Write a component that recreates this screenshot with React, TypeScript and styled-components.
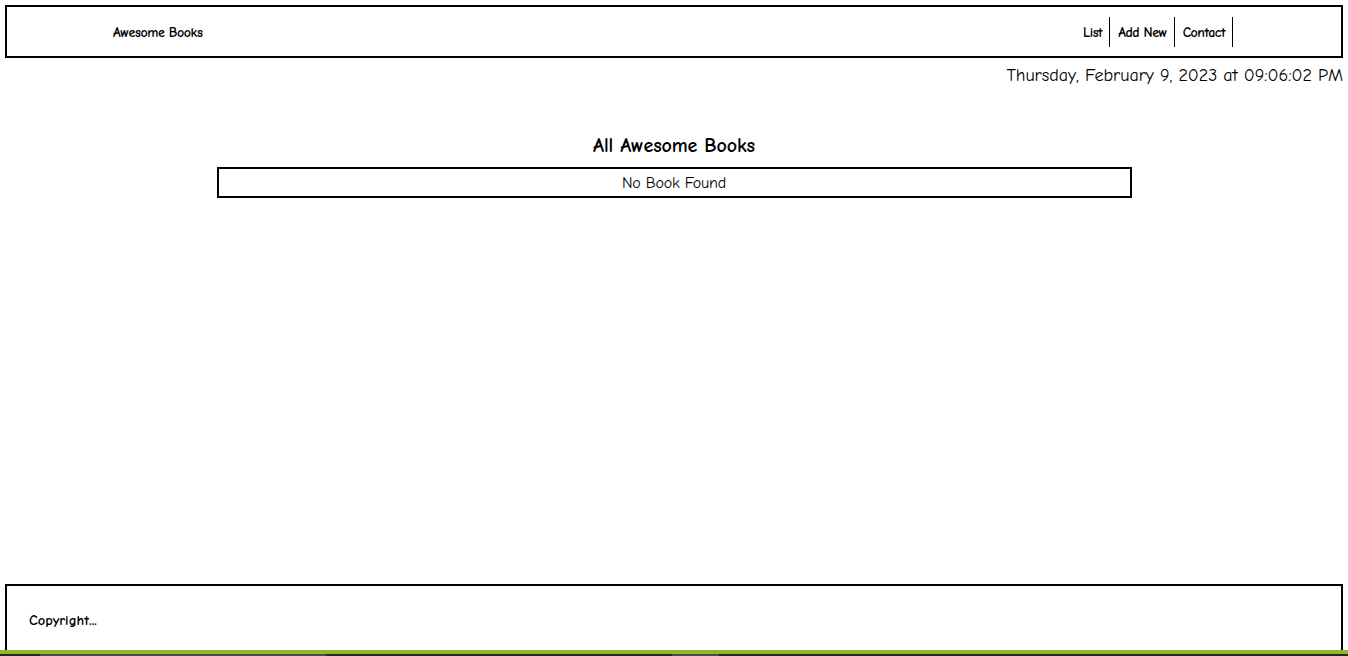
import React from "react";
import styled, { createGlobalStyle } from "styled-components";

const GlobalStyle = createGlobalStyle`
  html, body {
    margin: 0;
    padding: 0;
    background: #ffffff;
    color: #000000;
    font-family: "Comic Sans MS", "Comic Neue", "Lato", "Liberation Sans", sans-serif;
  }
  * { box-sizing: border-box; }
`;

const Page = styled.div`
  height: 100vh;
  overflow: hidden;
  display: grid;
  grid-template-rows: auto auto 1fr auto auto;
`;

const Header = styled.header`
  margin: 5px 5px 0;
  height: 53px;
  border: 2px solid #000;
  display: flex;
  align-items: center;
  justify-content: space-between;
  padding: 1px 108px 0 106px;
`;

const Brand = styled.h1`
  margin: 0;
  font-size: 14px;
  font-weight: 700;
  letter-spacing: -0.45px;
`;

const NavList = styled.ul`
  margin: 0;
  padding: 0;
  list-style: none;
  display: flex;
  align-items: center;
`;

const NavItem = styled.li`
  height: 30px;
  display: flex;
  align-items: center;
  padding: 0 7px 0 8px;
  border-right: 1px solid #000;
  font-size: 14px;
  font-weight: 700;
  letter-spacing: -0.5px;
`;

const DateLine = styled.p`
  margin: 6px 5px 0;
  text-align: right;
  font-size: 18px;
  line-height: 24px;
`;

const Main = styled.main`
  display: flex;
  flex-direction: column;
  align-items: center;
  padding-top: 45px;
`;

const Title = styled.h2`
  margin: 0 0 8px;
  font-size: 20px;
  line-height: 26px;
  font-weight: 700;
  letter-spacing: -0.1px;
`;

const BookBox = styled.div`
  width: 915px;
  height: 31px;
  border: 2px solid #000;
  display: flex;
  align-items: center;
  justify-content: center;
  font-size: 16px;
  letter-spacing: -0.2px;
`;

const Footer = styled.footer`
  margin: 0 5px;
  height: 66px;
  border: 2px solid #000;
  border-bottom: none;
  padding: 26px 22px 0;
  font-size: 14.5px;
  font-weight: 700;
`;

const Taskbar = styled.div`
  height: 6px;
  border-top: 4px solid #8aba29;
  background: #242b1b;
  display: flex;
`;

const TaskSlot = styled.div<{ $width: number; $gap: number }>`
  margin-left: ${(p) => p.$gap}px;
  width: ${(p) => p.$width}px;
  background: #4b4b47;
`;

export default function App() {
  return (
    <>
      <GlobalStyle />
      <Page>
        <Header>
          <Brand>Awesome Books</Brand>
          <nav>
            <NavList>
              <NavItem>List</NavItem>
              <NavItem>Add New</NavItem>
              <NavItem>Contact</NavItem>
            </NavList>
          </nav>
        </Header>
        <DateLine>Thursday, February 9, 2023 at 09:06:02 PM</DateLine>
        <Main>
          <Title>All Awesome Books</Title>
          <BookBox>No Book Found</BookBox>
        </Main>
        <Footer>Copyright...</Footer>
        <Taskbar>
          <TaskSlot $gap={40} $width={286} />
          <TaskSlot $gap={346} $width={47} />
        </Taskbar>
      </Page>
    </>
  );
}
